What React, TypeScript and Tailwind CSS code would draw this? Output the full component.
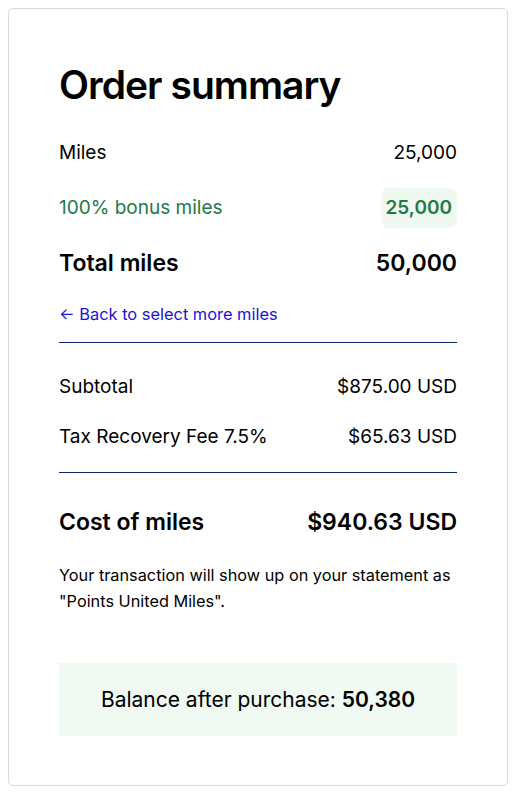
export default function App() {
  return (
    <div
      className="min-h-screen bg-white p-2 text-black"
      style={{ fontFamily: "Inter, 'Noto Sans', sans-serif" }}
    >
      <div className="h-[778px] rounded-[5px] border border-[#d5d8de] px-[50px] pt-[52px]">
        <h1 className="text-[39px] font-semibold leading-[48px] tracking-[-0.025em]">
          Order summary
        </h1>

        <div className="mt-[32px] flex items-center justify-between text-[19px] leading-[24px]">
          <span>Miles</span>
          <span>25,000</span>
        </div>

        <div className="mt-[23px] flex items-center justify-between text-[19px] leading-[24px] text-[#217a46]">
          <span>100% bonus miles</span>
          <span className="rounded-[8px] bg-[#eff9f1] px-[5px] py-[8px] font-semibold">25,000</span>
        </div>

        <div className="mt-[20px] flex items-center justify-between text-[23px] font-semibold leading-[30px]">
          <span>Total miles</span>
          <span>50,000</span>
        </div>

        <a href="#" className="mt-[25px] block text-[16.4px] leading-[22px] text-[#1a12d6]">
          ← Back to select more miles
        </a>

        <div className="mt-[17px] border-t border-[#0b2a6b]" />

        <div className="mt-[32px] flex items-center justify-between text-[19px] leading-[24px]">
          <span>Subtotal</span>
          <span>$875.00 USD</span>
        </div>

        <div className="mt-[26px] flex items-center justify-between text-[19px] leading-[24px]">
          <span>Tax Recovery Fee 7.5%</span>
          <span>$65.63 USD</span>
        </div>

        <div className="mt-[23px] border-t border-[#0b2a6b]" />

        <div className="mt-[34px] flex items-center justify-between text-[23px] font-semibold leading-[30px]">
          <span>Cost of miles</span>
          <span>$940.63 USD</span>
        </div>

        <p className="mt-[25px] text-[16.3px] leading-[26px]">
          Your transaction will show up on your statement as "Points United Miles".
        </p>

        <div className="mt-[49px] flex h-[73px] items-center justify-center bg-[#f1f9f3] text-[21px]">
          <span>
            Balance after purchase: <span className="font-semibold">50,380</span>
          </span>
        </div>
      </div>
    </div>
  );
}
